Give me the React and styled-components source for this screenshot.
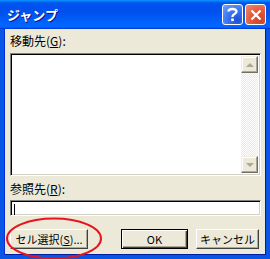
import React from 'react';
import styled, { createGlobalStyle, css } from 'styled-components';

const GlobalStyle = createGlobalStyle`
  html, body {
    margin: 0;
    padding: 0;
    background: #ffffff;
  }
`;

const uiFont = `"Liberation Sans", "Noto Sans CJK JP", sans-serif`;

const Window = styled.div`
  width: 270px;
  height: 259px;
  display: flex;
  flex-direction: column;
  font-family: ${uiFont};
  font-size: 12px;
  color: #000;
`;

const TitleBar = styled.div`
  height: 29px;
  flex: none;
  display: flex;
  align-items: center;
  padding: 0 4px 0 7px;
  box-sizing: border-box;
  background: linear-gradient(180deg, #0997ff 0%, #0053ee 10%, #0050ee 40%, #0066ff 86%, #0066ff 92%, #005bff 95%, #003dd7 97%, #003dd7 100%);
`;

const Title = styled.div`
  flex: 1;
  color: #fff;
  font-family: "Noto Sans CJK JP", sans-serif;
  font-weight: 700;
  font-size: 13px;
  text-shadow: 1px 1px #0f1089;
`;

const CaptionButtons = styled.div`
  display: flex;
  gap: 2px;
`;

const CaptionButton = styled.div`
  width: 21px;
  height: 21px;
  box-sizing: border-box;
  border: 1px solid #fff;
  border-radius: 3px;
  display: flex;
  align-items: center;
  justify-content: center;
  ${(p) =>
    p.$close
      ? css`
          background: radial-gradient(circle at 75% 80%, #cc4628 0%, #e2583b 45%, #f08a70 100%);
        `
      : css`
          background: radial-gradient(circle at 75% 80%, #1c4fd8 0%, #3a77f0 50%, #73a3fb 100%);
        `}
`;

const Frame = styled.div`
  flex: 1;
  display: flex;
  flex-direction: column;
  background: #ece9d8;
  border: 4px solid #0756e6;
  border-top: none;
  box-shadow: inset 1px 0 #0831d9, inset -1px 0 #001ea0, inset 0 -1px #001ea0;
  padding: 4px 5px 0 6px;
`;

const Label = styled.div`
  line-height: 16px;
  height: 16px;
  margin-top: ${(p) => p.$top || 0}px;
  font-family: "Noto Sans CJK JP", sans-serif;
  font-size: 12px;
`;

const Key = styled.span`
  text-decoration: underline;
  text-underline-offset: 1px;
`;

const sunken = css`
  box-sizing: border-box;
  background: #fff;
  border-style: solid;
  border-width: 1px;
  border-color: #808080 #fff #fff #808080;
  box-shadow: inset 1px 1px #000, inset -1px -1px #d4d0c8;
`;

const ListBox = styled.div`
  ${sunken}
  margin-top: 4px;
  width: 251px;
  height: 123px;
  display: flex;
  justify-content: flex-end;
  padding: 2px;
`;

const ScrollBar = styled.div`
  width: 17px;
  display: flex;
  flex-direction: column;
  justify-content: space-between;
  background: repeating-conic-gradient(#ffffff 0 25%, #ece9d8 0 50%) 0 0 / 2px 2px;
`;

const ScrollButton = styled.div`
  height: 17px;
  box-sizing: border-box;
  background: #ece9d8;
  border: 1px solid;
  border-color: #f1efe2 #716f64 #716f64 #f1efe2;
  box-shadow: inset -1px -1px #aca899, inset 1px 1px #fff;
  display: flex;
  align-items: center;
  justify-content: center;
`;

const Arrow = styled.div`
  width: 0;
  height: 0;
  border-left: 4px solid transparent;
  border-right: 4px solid transparent;
  ${(p) =>
    p.$down
      ? css`border-top: 4px solid #aca899;`
      : css`border-bottom: 4px solid #aca899;`}
`;

const Input = styled.div`
  ${sunken}
  margin-top: 3px;
  width: 251px;
  height: 16px;
  padding: 3px 0 0 3px;
`;

const Caret = styled.div`
  width: 1px;
  height: 11px;
  background: #000;
`;

const ButtonRow = styled.div`
  position: relative;
  margin-top: 13px;
  display: flex;
  align-items: center;
  padding-right: 2px;
`;

const Button = styled.div`
  width: ${(p) => p.$w}px;
  height: 20px;
  box-sizing: border-box;
  margin-left: ${(p) => p.$ml || 0}px;
  background: #ece9d8;
  border: 1px solid;
  border-color: #fff #404040 #404040 #fff;
  box-shadow: inset -1px -1px #aca899;
  display: flex;
  align-items: center;
  justify-content: center;
  font-family: "Noto Sans CJK JP", sans-serif;
  font-size: 11px;
  line-height: 14px;
  ${(p) =>
    p.$default &&
    css`
      border: 1px solid #000;
      box-shadow: inset 1px 1px #fff, inset -1px -1px #404040, inset -2px -2px #aca899;
    `}
`;

const Highlight = styled.svg`
  position: absolute;
  left: -5px;
  top: -12px;
  pointer-events: none;
`;

export default function App() {
  return (
    <>
      <GlobalStyle />
      <Window>
        <TitleBar>
          <Title>ジャンプ</Title>
          <CaptionButtons>
            <CaptionButton>
              <svg width="13" height="15" viewBox="0 0 13 15">
                <path d="M2.5 4.5 C2.5 1.5 10.5 1 10.5 4.5 C10.5 7 6.5 7 6.5 9.5 L6.5 10" fill="none" stroke="#fff" strokeWidth="2.4" />
                <rect x="5.2" y="11.5" width="2.6" height="2.6" fill="#fff" />
              </svg>
            </CaptionButton>
            <CaptionButton $close>
              <svg width="12" height="12" viewBox="0 0 12 12">
                <path d="M1.5 1.5 L10.5 10.5 M10.5 1.5 L1.5 10.5" stroke="#fff" strokeWidth="2.2" />
              </svg>
            </CaptionButton>
          </CaptionButtons>
        </TitleBar>
        <Frame>
          <Label>
            移動先(<Key>G</Key>):
          </Label>
          <ListBox>
            <ScrollBar>
              <ScrollButton>
                <Arrow />
              </ScrollButton>
              <ScrollButton>
                <Arrow $down />
              </ScrollButton>
            </ScrollBar>
          </ListBox>
          <Label $top={5}>
            参照先(<Key>R</Key>):
          </Label>
          <Input>
            <Caret />
          </Input>
          <ButtonRow>
            <Button $w={78}>
              セル選択(<Key>S</Key>)...
            </Button>
            <Button $w={67} $ml={33} $default>
              OK
            </Button>
            <Button $w={63} $ml={8}>
              キャンセル
            </Button>
            <Highlight width="98" height="43" viewBox="0 0 98 43">
              <ellipse cx="49" cy="21.5" rx="47" ry="20" fill="none" stroke="#e8141c" strokeWidth="2" />
            </Highlight>
          </ButtonRow>
        </Frame>
      </Window>
    </>
  );
}
